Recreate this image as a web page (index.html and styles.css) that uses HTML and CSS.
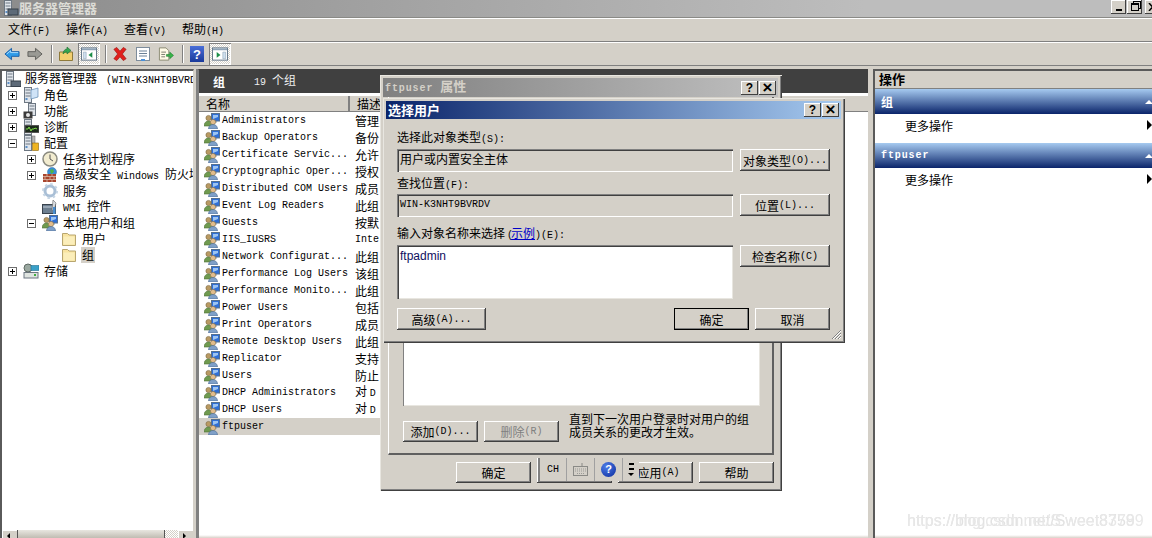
FILE: index.html
```html
<!DOCTYPE html>
<html lang="zh-CN">
<head>
  <meta charset="UTF-8" />
  <title>服务器管理器</title>
  <link rel="stylesheet" href="styles.css">
</head>
<body>
  <svg class="defs" width="0" height="0">
    <symbol id="i-users" viewBox="0 0 16 16">
      <rect x="7.5" y="0.5" width="8" height="7.5" fill="#2f6fd6" stroke="#56718f"/>
      <path d="M9 2h5v2l-5 2z" fill="#9cc4f2"/>
      <rect x="10" y="8" width="3" height="1.5" fill="#8a9bab"/>
      <circle cx="4.5" cy="5" r="2.6" fill="#b99a63" stroke="#7d6a45" stroke-width=".6"/>
      <path d="M0 13c0-3 2-5 4.500-5S9 10 9 13z" fill="#6f9a4f" stroke="#4f7038" stroke-width=".6"/>
      <circle cx="9" cy="9" r="2.600" fill="#e2bd8c" stroke="#8c7048" stroke-width=".6"/>
      <path d="M4.500 16c0-3 2-4.500 4.500-4.500s4.500 1.500 4.500 4.500z" fill="#7fa0c8" stroke="#4c6a90" stroke-width=".6"/>
    </symbol>
    <symbol id="i-folder" viewBox="0 0 16 16">
      <path d="M1.500 4V2.500h5L8 4h6.500v10.500h-13z" fill="#f8e3a0" stroke="#b8a670"/>
      <path d="M2.500 5.500h11v8h-11z" fill="#fbeebb"/>
    </symbol>
    <symbol id="i-server" viewBox="0 0 16 16">
      <rect x="1.500" y="0.500" width="7" height="15" fill="#dfe4ea" stroke="#6d7782"/>
      <path d="M2.500 3h5M2.500 6h5M2.500 9h5" stroke="#6d7782"/>
      <rect x="2.500" y="11" width="2" height="2" fill="#5b8fc9"/>
    </symbol>
    <symbol id="i-plus" viewBox="0 0 9 9">
      <rect x=".5" y=".5" width="8" height="8" fill="#fff" stroke="#6f6f6f"/>
      <path d="M2 4.500h5M4.500 2v5" stroke="#000"/>
    </symbol>
    <symbol id="i-minus" viewBox="0 0 9 9">
      <rect x=".5" y=".5" width="8" height="8" fill="#fff" stroke="#6f6f6f"/>
      <path d="M2 4.500h5" stroke="#000"/>
    </symbol>
  </svg>

  <div class="app">
    <div class="titlebar">
      <svg class="ico16" viewBox="0 0 16 16">
        <use href="#i-server"/>
        <rect x="5" y="9" width="10" height="6" fill="#5d6a78" stroke="#38424d"/>
      </svg>
      <span class="app-title">服务器管理器</span>
      <div class="win-btns">
        <span class="win-btn"><i class="glyph-min"></i></span>
        <span class="win-btn"><i class="glyph-restore"></i></span>
        <span class="win-btn win-btn-x"><svg width="9" height="8" viewBox="0 0 9 8"><path d="M1 0l7 8M8 0L1 8" stroke="#000" stroke-width="1.500"/></svg></span>
      </div>
    </div>

    <div class="menubar">
      <span>文件<em class="en">(F)</em></span>
      <span>操作<em class="en">(A)</em></span>
      <span>查看<em class="en">(V)</em></span>
      <span>帮助<em class="en">(H)</em></span>
    </div>

    <div class="toolbar">
      <span class="tb">
        <svg viewBox="0 0 17 16"><path d="M1 8l7-6v3.500h8v5H8V14z" fill="#2f9be8" stroke="#1b5fa6"/><path d="M3 8l4-3.500V6.500h8" fill="none" stroke="#a8dcff"/></svg>
      </span>
      <span class="tb">
        <svg viewBox="0 0 17 16"><path d="M16 8L9 2v3.500H1v5h8V14z" fill="#9a9a94" stroke="#5e5e5a"/></svg>
      </span>
      <i class="tb-sep"></i>
      <span class="tb tb-up">
        <svg viewBox="0 0 16 16"><path d="M1.500 6h13v8.500h-13z" fill="#f2cf6e" stroke="#8f7a3a"/><path d="M5 8c0-3 2-5 4-5V1l4 3.500L9 8V6C7 6 6 7 5 8z" fill="#35a650" stroke="#1f6d33" stroke-width=".6"/></svg>
      </span>
      <span class="tb tb-on">
        <svg viewBox="0 0 17 16"><rect x=".5" y="1.500" width="16" height="13" fill="#fff" stroke="#5f7386"/><rect x="1" y="2" width="15" height="2" fill="#8fa3b6"/><path d="M2.500 6h3v7h-3z" fill="#cfe0ef" stroke="#7f93a6" stroke-width=".5"/><path d="M12 6v6L8 9z" fill="#1d8f4a"/></svg>
      </span>
      <i class="tb-sep"></i>
      <span class="tb tb-del">
        <svg viewBox="0 0 17 16"><path d="M2 3l3-2 3.500 4L12 1l3 2-4 5 4 5-3 2-3.500-4L5 15l-3-2 4-5z" fill="#e0201c" stroke="#9c1512" stroke-width=".7"/></svg>
      </span>
      <span class="tb">
        <svg viewBox="0 0 16 16"><rect x="1.500" y="1.500" width="13" height="13" fill="#fff" stroke="#7d8c9b"/><path d="M4 5h8M4 7.500h8M4 10h8" stroke="#6b8096"/><rect x="6" y="13" width="4" height="2" fill="#4a90d9"/></svg>
      </span>
      <span class="tb">
        <svg viewBox="0 0 17 16"><path d="M1.500 1.500h7l3 3v10h-10z" fill="#fffbe6" stroke="#8a8a72"/><path d="M3.500 6h5M3.500 8.500h4M3.500 11h4" stroke="#77776a"/><path d="M9 8.500h3.500V6l4 3.500-4 3.500v-2.500H9z" fill="#39b54a" stroke="#1e7a2e" stroke-width=".6"/></svg>
      </span>
      <i class="tb-sep"></i>
      <span class="tb tb-help">?</span>
      <span class="tb tb-on">
        <svg viewBox="0 0 17 16"><rect x=".5" y="1.500" width="16" height="13" fill="#fff" stroke="#5f7386"/><rect x="1" y="2" width="15" height="2" fill="#8fa3b6"/><path d="M11.500 6h3v7h-3z" fill="#cfe0ef" stroke="#7f93a6" stroke-width=".5"/><path d="M5 6v6l4-3z" fill="#1d8f4a"/></svg>
      </span>
    </div>

    <div class="main">
      <div class="tree-pane">
        <div class="tree">
          <div class="node lv0">
            <svg class="ico16" viewBox="0 0 16 16"><use href="#i-server"/><rect x="6" y="10" width="10" height="5.500" fill="#5d6a78" stroke="#38424d"/></svg>
            <span class="label">服务器管理器<em class="en root-host">(WIN-K3NHT9BVRDV)</em></span>
          </div>
          <div class="node lv1">
            <svg class="exp"><use href="#i-plus"/></svg>
            <svg class="ico16" viewBox="0 0 16 16"><use href="#i-server"/><path d="M8 3l7-2v9l-7 2z" fill="#cfe3f7" stroke="#5f88b0" stroke-width=".7"/></svg>
            <span class="label">角色</span>
          </div>
          <div class="node lv1">
            <svg class="exp"><use href="#i-plus"/></svg>
            <svg class="ico16" viewBox="0 0 16 16"><rect x="5.500" y="0.500" width="7" height="12" fill="#dfe4ea" stroke="#6d7782"/><path d="M6.500 3h5M6.500 6h5" stroke="#6d7782"/><rect x="0.500" y="8.500" width="9" height="7" fill="#3b3b3b"/><circle cx="5" cy="12" r="2" fill="#e8e8e8"/></svg>
            <span class="label">功能</span>
          </div>
          <div class="node lv1">
            <svg class="exp"><use href="#i-plus"/></svg>
            <svg class="ico16" viewBox="0 0 16 16"><use href="#i-server"/><rect x="2" y="6.500" width="14" height="7" fill="#1c2a1c" stroke="#555"/><path d="M3 10h2l1-2 2 4 1-2h2l1-1 2 1" fill="none" stroke="#7ddc4a"/></svg>
            <span class="label">诊断</span>
          </div>
          <div class="node lv1">
            <svg class="exp"><use href="#i-minus"/></svg>
            <svg class="ico16" viewBox="0 0 16 16"><use href="#i-server"/><rect x="9" y="1" width="3" height="8" fill="#b8b8b8" stroke="#666" stroke-width=".5"/><rect x="9.500" y="8" width="6" height="7.500" fill="#eeb422" stroke="#8a6510" stroke-width=".6"/></svg>
            <span class="label">配置</span>
          </div>
          <div class="node lv2">
            <svg class="exp"><use href="#i-plus"/></svg>
            <svg class="ico16" viewBox="0 0 16 16"><circle cx="8" cy="8" r="7" fill="#f2ecd0" stroke="#8a8a80" stroke-width="1.500"/><path d="M8 3.500V8l3 2" fill="none" stroke="#555"/></svg>
            <span class="label">任务计划程序</span>
          </div>
          <div class="node lv2">
            <svg class="exp"><use href="#i-plus"/></svg>
            <svg class="ico16" viewBox="0 0 16 16"><circle cx="10" cy="5" r="4.500" fill="#3a8fd8" stroke="#2a6a9e" stroke-width=".5"/><path d="M8 3l3-1 1 3-3 2z" fill="#4bb54a"/><rect x="1" y="7" width="13" height="8" fill="#a8452e"/><path d="M1 9.500h13M1 12.500h13M5 7v2.500M10 7v2.500M3 9.500v3M8 9.500v3M12 9.500v3M5 12.500V15M10 12.500V15" stroke="#e0c8b8" stroke-width=".7"/></svg>
            <span class="label">高级安全<em class="en en-gap">Windows</em>防火墙</span>
          </div>
          <div class="node lv2 noexp">
            <svg class="ico16" viewBox="0 0 16 16"><circle cx="8" cy="8" r="5" fill="none" stroke="#a9bfd6" stroke-width="3"/><circle cx="8" cy="8" r="7" fill="none" stroke="#c6d5e4" stroke-width="2" stroke-dasharray="2.500 3"/></svg>
            <span class="label">服务</span>
          </div>
          <div class="node lv2 noexp">
            <svg class="ico16" viewBox="0 0 16 16"><rect x="0.500" y="5.500" width="13" height="9" fill="#6d7f90" stroke="#39434d"/><path d="M1 8h12" stroke="#c6d0da"/><path d="M11 1l3 3-2 8-2-1z" fill="#d8dce0" stroke="#666" stroke-width=".6"/><rect x="11" y="8" width="2.500" height="7" fill="#4a8fd0"/></svg>
            <span class="label"><em class="en wmi">WMI</em>控件</span>
          </div>
          <div class="node lv2">
            <svg class="exp"><use href="#i-minus"/></svg>
            <svg class="ico16"><use href="#i-users"/></svg>
            <span class="label">本地用户和组</span>
          </div>
          <div class="node lv3">
            <svg class="ico16"><use href="#i-folder"/></svg>
            <span class="label">用户</span>
          </div>
          <div class="node lv3">
            <svg class="ico16"><use href="#i-folder"/></svg>
            <span class="label label-sel">组</span>
          </div>
          <div class="node lv1">
            <svg class="exp"><use href="#i-plus"/></svg>
            <svg class="ico16" viewBox="0 0 16 16"><rect x="1" y="9.500" width="14" height="5.500" fill="#dfe4e0" stroke="#6d7782"/><rect x="11" y="11" width="2" height="2" fill="#3faf3f"/><circle cx="5" cy="5" r="4" fill="#9aa8a0" stroke="#5f6a64"/><rect x="8" y="2.500" width="8" height="5" fill="#3aa0c8" stroke="#24708f" stroke-width=".6"/></svg>
            <span class="label">存储</span>
          </div>
        </div>
        <div class="hscroll">
          <span class="sb-btn sb-left"></span>
          <span class="sb-thumb"></span>
          <span class="sb-track"></span>
          <span class="sb-btn sb-right"></span>
        </div>
      </div>

      <div class="list-pane">
        <div class="pane-head">
          <b>组</b>
          <span class="count"><em class="en">19</em>个组</span>
        </div>
        <div class="col-head">
          <span class="col col-name">名称</span>
          <span class="col col-desc">描述</span>
        </div>
        <div class="rows">
          <div class="row"><svg class="ico16"><use href="#i-users"/></svg><span class="r-name">Administrators</span><span class="r-desc">管理员</span></div>
          <div class="row"><svg class="ico16"><use href="#i-users"/></svg><span class="r-name">Backup Operators</span><span class="r-desc">备份</span></div>
          <div class="row"><svg class="ico16"><use href="#i-users"/></svg><span class="r-name">Certificate Servic...</span><span class="r-desc">允许</span></div>
          <div class="row"><svg class="ico16"><use href="#i-users"/></svg><span class="r-name">Cryptographic Oper...</span><span class="r-desc">授权</span></div>
          <div class="row"><svg class="ico16"><use href="#i-users"/></svg><span class="r-name">Distributed COM Users</span><span class="r-desc">成员</span></div>
          <div class="row"><svg class="ico16"><use href="#i-users"/></svg><span class="r-name">Event Log Readers</span><span class="r-desc">此组</span></div>
          <div class="row"><svg class="ico16"><use href="#i-users"/></svg><span class="r-name">Guests</span><span class="r-desc">按默</span></div>
          <div class="row"><svg class="ico16"><use href="#i-users"/></svg><span class="r-name">IIS_IUSRS</span><span class="r-desc en">Inte</span></div>
          <div class="row"><svg class="ico16"><use href="#i-users"/></svg><span class="r-name">Network Configurat...</span><span class="r-desc">此组</span></div>
          <div class="row"><svg class="ico16"><use href="#i-users"/></svg><span class="r-name">Performance Log Users</span><span class="r-desc">该组</span></div>
          <div class="row"><svg class="ico16"><use href="#i-users"/></svg><span class="r-name">Performance Monito...</span><span class="r-desc">此组</span></div>
          <div class="row"><svg class="ico16"><use href="#i-users"/></svg><span class="r-name">Power Users</span><span class="r-desc">包括</span></div>
          <div class="row"><svg class="ico16"><use href="#i-users"/></svg><span class="r-name">Print Operators</span><span class="r-desc">成员</span></div>
          <div class="row"><svg class="ico16"><use href="#i-users"/></svg><span class="r-name">Remote Desktop Users</span><span class="r-desc">此组</span></div>
          <div class="row"><svg class="ico16"><use href="#i-users"/></svg><span class="r-name">Replicator</span><span class="r-desc">支持</span></div>
          <div class="row"><svg class="ico16"><use href="#i-users"/></svg><span class="r-name">Users</span><span class="r-desc">防止</span></div>
          <div class="row"><svg class="ico16"><use href="#i-users"/></svg><span class="r-name">DHCP Administrators</span><span class="r-desc">对 <em class="en">D</em></span></div>
          <div class="row"><svg class="ico16"><use href="#i-users"/></svg><span class="r-name">DHCP Users</span><span class="r-desc">对 <em class="en">D</em></span></div>
          <div class="row row-sel"><svg class="ico16"><use href="#i-users"/></svg><span class="r-name">ftpuser</span></div>
        </div>
      </div>

      <div class="action-pane">
        <div class="action-head">操作</div>
        <div class="section"><b>组</b><i class="tri-up"></i></div>
        <div class="action-row">更多操作<i class="tri-right"></i></div>
        <div class="section"><b class="en">ftpuser</b><i class="tri-up"></i></div>
        <div class="action-row">更多操作<i class="tri-right"></i></div>
      </div>
    </div>
  </div>

  <!-- 属性对话框（后面） -->
  <div class="dialog props">
    <div class="dlg-title dlg-title-off">
      <b><em class="en">ftpuser</em><em class="props-word">属性</em></b>
      <span class="cap-btns"><span class="cap-btn">?</span><span class="cap-btn cap-x">×</span></span>
    </div>
    <div class="props-body">
      <div class="props-frame">
        <div class="member-box"></div>
        <div class="member-foot">
          <span class="btn btn-wide">添加<em class="en">(D)...</em></span>
          <span class="btn btn-wide btn-off">删除<em class="en">(R)</em></span>
          <p class="note">直到下一次用户登录时对用户的组成员关系的更改才生效。</p>
        </div>
      </div>
      <div class="props-foot">
        <span class="btn btn-wide">确定</span>
        <span class="btn btn-wide">取消</span>
        <span class="btn btn-wide btn-apply">应用<em class="en">(A)</em></span>
        <span class="btn btn-wide">帮助</span>
      </div>
    </div>
    <div class="langbar">
      <span class="lang-cell lang-ch en">CH</span>
      <span class="lang-cell">
        <svg width="17" height="14" viewBox="0 0 17 14"><path d="M10 0v3" stroke="#8a8a86"/><rect x="1.500" y="3.500" width="14" height="9" fill="#d4d0c8" stroke="#8a8a86"/><path d="M3 6h11M3 8h11M5 10.500h7" stroke="#9a9a96" stroke-dasharray="1 1"/></svg>
      </span>
      <span class="lang-cell"><span class="lang-help">?</span></span>
      <span class="lang-grip"><i></i><i></i><i class="grip-tri"></i></span>
    </div>
  </div>

  <!-- 选择用户对话框（前面） -->
  <div class="dialog picker">
    <div class="dlg-title">
      <b>选择用户</b>
      <span class="cap-btns"><span class="cap-btn">?</span><span class="cap-btn cap-x">×</span></span>
    </div>
    <div class="picker-body">
      <label class="lbl lbl-first">选择此对象类型<em class="en">(S):</em></label>
      <div class="pick-row">
        <div class="field">用户或内置安全主体</div>
        <span class="btn btn-side">对象类型<em class="en">(O)...</em></span>
      </div>
      <label class="lbl">查找位置<em class="en">(F):</em></label>
      <div class="pick-row pick-row-loc">
        <div class="field en">WIN-K3NHT9BVRDV</div>
        <span class="btn btn-side">位置<em class="en">(L)...</em></span>
      </div>
      <label class="lbl lbl-first">输入对象名称来选择<em class="en paren">(</em><a class="sample">示例</a><em class="en">)(E):</em></label>
      <div class="pick-row pick-row-top">
        <div class="field field-input">ftpadmin</div>
        <span class="btn btn-side">检查名称<em class="en">(C)</em></span>
      </div>
      <div class="picker-foot">
        <span class="btn btn-adv">高级<em class="en">(A)...</em></span>
        <span class="foot-right">
          <span class="btn btn-wide btn-def">确定</span>
          <span class="btn btn-wide">取消</span>
        </span>
      </div>
    </div>
    <svg class="grip" width="11" height="11" viewBox="0 0 11 11"><path d="M10 1L1 10M10 4l-6 6M10 7l-3 3" stroke="#808080"/><path d="M10 2L2 10M10 5l-5 5M10 8l-2 2" stroke="#fff"/></svg>
  </div>

  <div class="watermark"><span>https://blog.csdn.net/Sweet8759</span><span class="wm-b">https://img.csdn.net/S.weet33789</span></div>
</body>
</html>
```

FILE: styles.css
```css
* {
  box-sizing: border-box;
}

html, body {
  margin: 0;
  height: 538px;
  overflow: hidden;
}

body {
  position: relative;
  font-family: "Noto Sans CJK SC", "Liberation Sans", sans-serif;
  font-size: 12px;
  line-height: 16px;
  color: #000;
  background: #d4d0c8;
}

em {
  font-style: normal;
}

.en {
  font-family: "Liberation Mono", monospace;
  font-size: 10px;
}

b .en,
b.en {
  font-size: 10px;
  letter-spacing: .9px;
}

.defs {
  position: absolute;
}

.ico16 {
  width: 16px;
  height: 16px;
  flex: none;
}

.app {
  display: flex;
  flex-direction: column;
  height: 538px;
}

/* 标题栏 */
.titlebar {
  display: flex;
  align-items: flex-start;
  height: 18px;
  padding-left: 3px;
  background: linear-gradient(90deg, #8c8c8c, #bdbdbd 75%);
  border-bottom: 1px solid #8a8a86;
}

.app-title {
  font-weight: bold;
  font-size: 13px;
  color: #dcdcd6;
  line-height: 15px;
}

.win-btns {
  display: flex;
  margin-left: auto;
  margin-right: -8px;
  gap: 1px;
}

.win-btn {
  display: flex;
  align-items: center;
  justify-content: center;
  width: 15px;
  height: 14px;
  background: #d4d0c8;
  box-shadow: inset -1px -1px #404040, inset 1px 1px #fff;
}

.win-btn-x {
  margin-left: 2px;
}

.glyph-min {
  width: 6px;
  height: 2px;
  margin-top: 6px;
  background: #000;
}

.glyph-restore {
  width: 8px;
  height: 8px;
  border: 1px solid #000;
  border-top-width: 2px;
  box-shadow: 2px -2px 0 -1px #d4d0c8, 2px -2px 0 0 #000;
}

/* 菜单和工具栏 */
.menubar {
  display: flex;
  gap: 16px;
  height: 24px;
  padding: 2px 0 0 8px;
  border-top: 1px solid #fff;
  border-bottom: 1px solid #808080;
}

.menubar span {
  width: 42px;
  white-space: nowrap;
}

.toolbar {
  display: flex;
  align-items: center;
  height: 24px;
  padding-left: 4px;
  border-top: 1px solid #fff;
  border-bottom: 1px solid #808080;
}

.tb {
  display: flex;
  align-items: center;
  justify-content: center;
  width: 16px;
  height: 16px;
  margin-right: 7px;
  flex: none;
}

.tb svg {
  width: 16px;
  height: 16px;
}

.tb-up {
  margin-right: 4px;
}

.tb-on {
  width: 22px;
  height: 22px;
  margin-right: 4px;
  background: repeating-conic-gradient(#d4d0c8 0 25%, #fff 0 50%) 0 0/2px 2px;
  box-shadow: inset 1px 1px #808080, inset -1px -1px #fff;
}

.tb-del svg {
  width: 17px;
}

.tb-help {
  width: 14px;
  height: 16px;
  margin: 0 5px 0 1px;
  background: linear-gradient(#4a6fd8, #1a3a9a);
  color: #fff;
  font: bold 13px "Liberation Sans", sans-serif;
}

.tb-sep {
  width: 2px;
  height: 18px;
  margin: 0 5px 0 1px;
  background: #808080;
  border-right: 1px solid #fff;
  flex: none;
}

/* 三个窗格 */
.main {
  display: flex;
  flex: 1;
  min-height: 0;
  padding-top: 3px;
}

.tree-pane {
  display: flex;
  flex-direction: column;
  width: 194px;
  background: #fff;
  border-top: 2px solid #5a5a5a;
  border-left: 2px solid #5a5a5a;
  border-right: 1px solid #d4d0c8;
  overflow: hidden;
}

.tree {
  flex: 1;
  overflow: hidden;
}

.node {
  display: flex;
  align-items: center;
  height: 16px;
  white-space: nowrap;
}

.label {
  margin-left: 4px;
  padding: 0 1px;
}

.root-host {
  margin-left: 9px;
}

.en-gap {
  margin: 0 6px;
}

.wmi {
  margin-right: 6px;
}

.lv0 {
  padding-left: 3px;
}

.lv0 .label {
  margin-left: 3px;
}

.lv1 {
  padding-left: 6px;
}

.lv2 {
  padding-left: 25px;
}

.lv3 {
  padding-left: 59px;
}

.exp {
  width: 9px;
  height: 9px;
  margin-right: 6px;
  flex: none;
}

.noexp {
  padding-left: 40px;
}

.label-sel {
  background: #d4d0c8;
}

.hscroll {
  display: flex;
  height: 8px;
  background: #d4d0c8;
}

.sb-btn {
  position: relative;
  width: 15px;
  box-shadow: inset 1px 1px #fff;
}

.sb-left::after,
.sb-right::after {
  content: "";
  position: absolute;
  top: 3px;
  left: 5px;
  border: 3px solid transparent;
  border-right-color: #000;
  border-left-width: 0;
}

.sb-right::after {
  border-right-width: 0;
  border-left: 3px solid #000;
}

.sb-thumb {
  flex: 1;
  background: linear-gradient(#e8e6e0, #c0bcb2);
  border-left: 1px solid #555;
  border-right: 1px solid #555;
}

.sb-track {
  width: 13px;
  background: repeating-conic-gradient(#d4d0c8 0 25%, #fff 0 50%) 0 0/2px 2px;
}

.list-pane {
  width: 670px;
  margin-left: 4px;
  background: linear-gradient(#fff calc(100% - 3px), #d8d0c8);
  border-left: 1px solid #808080;
  border-top: 1px solid #404040;
  box-shadow: -2px 0 #808080;
  overflow: hidden;
}

.pane-head {
  display: flex;
  align-items: center;
  height: 23px;
  padding-left: 14px;
  background: #404040;
  color: #fff;
}

.pane-head b {
  width: 41px;
}

.count {
  color: #eee;
}

.count .en {
  margin-right: 6px;
}

.col-head {
  display: flex;
  height: 17px;
  margin-top: 2px;
  background: #d4d0c8;
  border-top: 1px solid #fff;
  border-bottom: 1px solid #808080;
}

.col {
  padding-left: 7px;
  line-height: 15px;
}

.col-name {
  width: 151px;
  border-right: 2px solid #808080;
}

.row {
  display: flex;
  align-items: center;
  height: 17px;
  padding-left: 5px;
  white-space: nowrap;
}

.row-sel {
  width: 200px;
  background: #d4d0c8;
}

.r-name {
  width: 133px;
  margin-left: 2px;
  font-family: "Liberation Mono", monospace;
  font-size: 10px;
}

.action-pane {
  flex: 1;
  margin-left: 5px;
  background: linear-gradient(#fff calc(100% - 3px), #d8d0c8);
  border-left: 2px solid #5a5a5a;
  border-top: 2px solid #5a5a5a;
}

.action-head {
  height: 18px;
  padding-left: 4px;
  font-weight: bold;
  font-size: 13px;
  background: #d4d0c8;
  border-bottom: 1px solid #808080;
}

.section {
  display: flex;
  align-items: center;
  justify-content: space-between;
  height: 25px;
  padding: 0 0 0 6px;
  color: #fff;
  background: linear-gradient(#a6caf0, #0a246a);
}

.action-row {
  display: flex;
  justify-content: space-between;
  height: 29px;
  padding: 4px 0 0 30px;
}

.tri-up {
  border: 4px solid transparent;
  border-top-width: 0;
  border-bottom: 4px solid #fff;
  margin-right: -1px;
}

.tri-right {
  margin-top: 2px;
  height: 10px;
  border: 5px solid transparent;
  border-right-width: 0;
  border-left: 5px solid #000;
}

/* 对话框 */
.dialog {
  position: absolute;
  background: #d4d0c8;
  box-shadow: inset 1px 1px #e8e6e0, inset -1px -1px #404040, inset -2px -2px #808080;
}

.props {
  display: flex;
  flex-direction: column;
  left: 380px;
  top: 75px;
  width: 402px;
  height: 416px;
  padding: 3px 4px 0 3px;
}

.picker {
  left: 383px;
  top: 98px;
  width: 462px;
  height: 245px;
  padding: 3px 4px 0 3px;
}

.dlg-title {
  display: flex;
  align-items: center;
  justify-content: space-between;
  height: 18px;
  padding-left: 2px;
  font-size: 13px;
  color: #fff;
  background: linear-gradient(90deg, #0a246a, #a6caf0);
}

.dlg-title-off {
  height: 19px;
  color: #d4d0c8;
  background: linear-gradient(90deg, #808080, #c0c0c0);
}

.props-word {
  margin-left: 7px;
}

.cap-btns {
  display: flex;
  gap: 1px;
  margin-right: 2px;
}

.cap-btn {
  width: 17px;
  height: 14px;
  font: bold 12px/14px "Liberation Sans", sans-serif;
  text-align: center;
  color: #000;
  background: #d4d0c8;
  box-shadow: inset -1px -1px #404040, inset 1px 1px #fff;
}

.cap-x {
  font-size: 17px;
  line-height: 13px;
}

.btn {
  display: flex;
  align-items: center;
  justify-content: center;
  height: 22px;
  padding-top: 1px;
  white-space: nowrap;
  background: #d4d0c8;
  box-shadow: inset -1px -1px #404040, inset 1px 1px #fff, inset -2px -2px #808080;
  flex: none;
}

.btn-wide {
  width: 75px;
}

.btn-side {
  width: 90px;
}

.btn-adv {
  width: 89px;
}

.btn-def {
  outline: 1px solid #000;
  outline-offset: -1px;
}

.btn-off {
  color: #808080;
}

.props-body {
  display: flex;
  flex-direction: column;
  flex: 1;
  padding: 0 4px 0 5px;
}

.props-frame {
  display: flex;
  flex-direction: column;
  justify-content: flex-end;
  flex: 1;
  padding: 0 12px 11px 14px;
  border-bottom: 2px solid #606060;
  border-left: 1px solid #fff;
  border-right: 2px solid #606060;
}

.member-box {
  height: 100px;
  background: #fff;
  box-shadow: inset 1px 1px #808080, inset -1px -1px #e8e6e0;
}

.member-foot {
  display: flex;
  gap: 6px;
  margin-top: 6px;
  height: 30px;
  align-items: flex-end;
}

.member-foot .btn {
  height: 21px;
}

.note {
  width: 182px;
  margin: 0 0 0 4px;
  line-height: 13px;
  align-self: flex-start;
}

.props-foot {
  display: flex;
  justify-content: flex-end;
  gap: 6px;
  height: 36px;
  padding-top: 7px;
}

.props-foot .btn {
  height: 21px;
}

.btn-apply {
  padding-left: 6px;
}

.langbar {
  position: absolute;
  left: 157px;
  top: 383px;
  display: flex;
  height: 23px;
  background: #d4d0c8;
  box-shadow: inset 1px 0 #fff;
}

.lang-cell {
  display: flex;
  align-items: center;
  justify-content: center;
  width: 28px;
  border-left: 1px solid #a0a0a0;
}

.lang-cell:first-child {
  margin-left: 1px;
  border-left: 2px solid #808080;
}

.lang-help {
  width: 15px;
  height: 15px;
  border-radius: 50%;
  font: bold 11px/15px "Liberation Sans", sans-serif;
  text-align: center;
  color: #fff;
  background: radial-gradient(circle at 35% 30%, #4d7de8, #0a2a9c);
}

.lang-grip {
  display: flex;
  flex-direction: column;
  align-items: center;
  gap: 3px;
  width: 17px;
  padding-top: 5px;
  border-left: 1px solid #a0a0a0;
}

.lang-grip i {
  width: 5px;
  height: 2px;
  background: #000;
}

.lang-grip .grip-tri {
  height: 0;
  background: none;
  border: 3px solid transparent;
  border-bottom-width: 0;
  border-top-color: #000;
  width: 0;
}

.picker-body {
  display: flex;
  flex-direction: column;
  padding: 10px 11px 0 11px;
}

.lbl {
  display: block;
  height: 19px;
  line-height: 16px;
}

.lbl-first {
  height: 20px;
}

.pick-row {
  display: flex;
  align-items: flex-start;
  justify-content: space-between;
  height: 26px;
}

.pick-row-loc {
  height: 31px;
}

.pick-row-top {
  height: 63px;
}

.field {
  width: 336px;
  height: 23px;
  padding: 2px 0 0 3px;
  box-shadow: inset 1px 1px #808080, inset 2px 2px #404040, inset -1px -1px #fff;
}

.field.en {
  line-height: 18px;
}

.field-input {
  height: 54px;
  padding-top: 3px;
  font-family: "Liberation Sans", sans-serif;
  background: #fff;
  color: #101060;
  box-shadow: inset 1px 1px #808080, inset 2px 2px #404040, inset -1px -1px #e8e6e0;
}

.paren {
  margin: 0 -2px 0 2px;
}

.sample {
  color: #0000c8;
  text-decoration: underline;
}

.picker-foot {
  display: flex;
  justify-content: space-between;
}

.foot-right {
  display: flex;
  gap: 6px;
}

.grip {
  position: absolute;
  right: 3px;
  bottom: 3px;
}

.watermark {
  position: absolute;
  left: 907px;
  top: 512px;
  font: 16px/18px "Liberation Sans", sans-serif;
  color: #e2e2e2;
  filter: blur(.4px);
}

.wm-b {
  position: absolute;
  left: 0;
  top: 0;
  color: #e8e8e8;
}
```
